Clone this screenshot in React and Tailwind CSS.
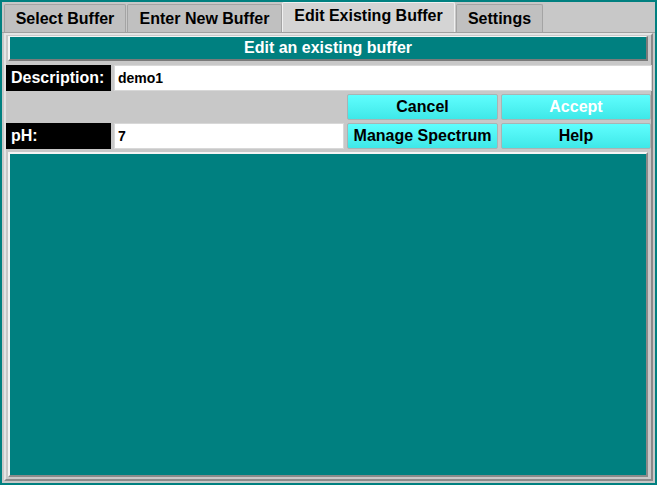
import React, { useState } from "react";

const tabs = ["Select Buffer", "Enter New Buffer", "Edit Existing Buffer", "Settings"];
const tabWidths = ["w-[122px] mr-px", "w-[155px]", "w-[173px] mr-px", "w-[87px]"];

const CyanButton = ({ children, muted }) => (
  <button
    className={`h-[26px] rounded-[2px] border border-[#a8b4b4] bg-gradient-to-b from-[#5ffefe] to-[#3ee8e8] text-[16px] font-bold leading-none ${
      muted ? "text-white" : "text-black"
    }`}
  >
    {children}
  </button>
);

const Label = ({ children }) => (
  <div className="h-[26px] bg-black text-white text-[16px] font-bold flex items-center pl-[5px]">
    {children}
  </div>
);

const TextBox = ({ value, className = "" }) => (
  <input
    defaultValue={value}
    className={`h-[26px] bg-white border border-[#d8d8d8] px-[3px] text-[14px] font-bold text-black outline-none ${className}`}
  />
);

export default function App() {
  const [active, setActive] = useState(2);

  return (
    <div
      className="w-[657px] h-[485px] bg-[#008080] p-[2px]"
      style={{ fontFamily: '"Liberation Sans", Arial, sans-serif' }}
    >
      <div className="h-full bg-[#c8c8c8] flex flex-col">
        {/* tab strip */}
        <div className="h-[30px] flex items-end pl-[2px]">
          {tabs.map((t, i) => (
            <button
              key={t}
              onClick={() => setActive(i)}
              className={`${tabWidths[i]} text-[16px] font-bold text-black border border-b-0 rounded-t-[2px] ${
                i === active
                  ? "h-[30px] bg-[#d4d4d4] border-[#f0f0f0] pb-[3px]"
                  : "h-[28px] bg-[#c0c0c0] border-[#a4a4a4]"
              }`}
            >
              {t}
            </button>
          ))}
        </div>

        {/* tab body */}
        <div className="flex-1 border-t border-[#a0a0a0] px-[2px] pb-[2px]">
          <div className="h-full border-t-2 border-l-2 border-[#e4e4e4] border-r-2 border-b-2 border-r-[#8a8a8a] border-b-[#8a8a8a] flex flex-col px-px pt-px">
            <div className="h-[25px] ml-px mr-[2px] bg-[#008080] border-l-2 border-t border-[#f4f4f4] border-r-2 border-b-2 border-r-[#7a7a7a] border-b-[#7a7a7a] text-white text-[16px] font-bold flex items-center justify-center">
              Edit an existing buffer
            </div>

            <div className="mt-[4px] grid grid-cols-[105px_230px_151px_150px] gap-x-[3px] gap-y-[3px] -ml-px">
              <Label>Description:</Label>
              <TextBox value="demo1" className="col-span-3 w-[538px]" />

              <div className="col-span-2" />
              <CyanButton>Cancel</CyanButton>
              <CyanButton muted>Accept</CyanButton>

              <Label>pH:</Label>
              <TextBox value="7" className="w-[230px]" />
              <CyanButton>Manage Spectrum</CyanButton>
              <CyanButton>Help</CyanButton>
            </div>

            <div className="flex-1 mt-[3px] ml-px mr-[2px] mb-[2px] bg-[#008080] border-l-2 border-t-2 border-[#f4f4f4] border-r-2 border-b-2 border-r-[#8a8a8a] border-b-[#8a8a8a]" />
          </div>
        </div>
      </div>
    </div>
  );
}
